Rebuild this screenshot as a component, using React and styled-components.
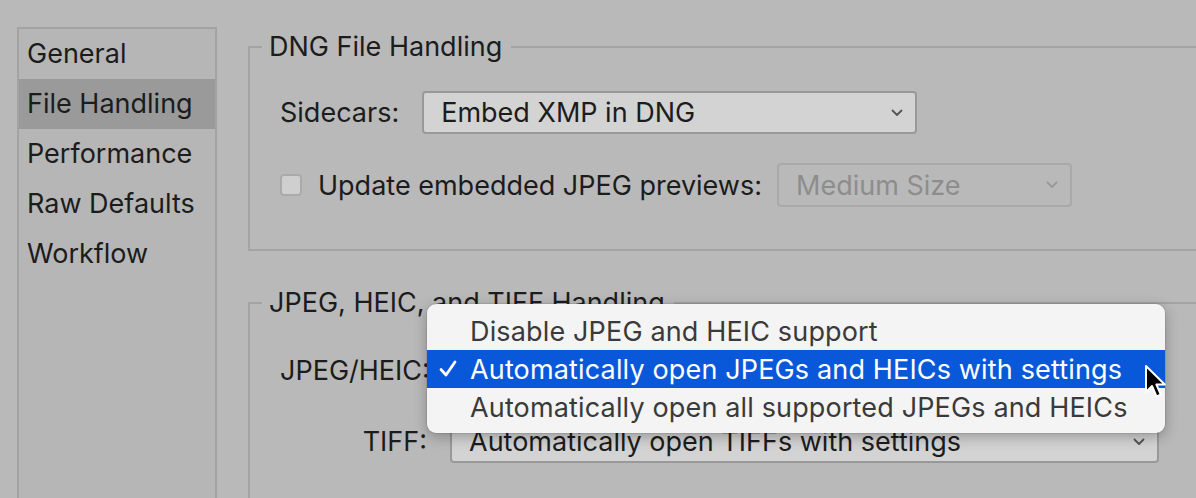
import React from 'react'
import styled, { createGlobalStyle } from 'styled-components'

const Global = createGlobalStyle`
  html, body {
    margin: 0;
    padding: 0;
    background: #b9b9b9;
    overflow: hidden;
  }
  body {
    font-family: Inter, "Noto Sans", sans-serif;
    color: #1c1c1c;
  }
`;

const Page = styled.div`
  width: 1196px;
  height: 498px;
  display: flex;
  align-items: flex-start;
  padding: 27px 0 0 17px;
  box-sizing: border-box;
  overflow: hidden;
`;

const Sidebar = styled.ul`
  list-style: none;
  margin: 0;
  padding: 0;
  width: 200px;
  height: 520px;
  box-sizing: border-box;
  border: 2px solid #a3a3a3;
  background: #b6b6b6;
  flex-shrink: 0;
`;

const NavItem = styled.li`
  height: 50px;
  line-height: 50px;
  padding-left: 8px;
  font-size: 27px;
  background: ${p => (p.$active ? '#9a9a9a' : 'transparent')};
`;

const Main = styled.div`
  flex: 1;
  padding-left: 31px;
  display: flex;
  flex-direction: column;
  gap: ${p => p.$gap}px;
`;

const Group = styled.fieldset`
  margin: 0;
  border: 2px solid #a3a3a3;
  border-right: none;
  padding: 0;
  min-width: 0;
  height: ${p => p.$height}px;
  box-sizing: border-box;
  margin-top: ${p => p.$top || 0}px;
`;

const Legend = styled.legend`
  font-size: 27px;
  padding: 0 9px 0 7px;
  margin-left: 12px;
  line-height: 30px;
  height: 30px;
`;

const GroupBody = styled.div`
  padding: ${p => p.$top}px 0 0 30px;
  position: relative;
`;

const Row = styled.div`
  display: flex;
  align-items: center;
  gap: ${p => p.$gap ?? 20}px;
  margin-bottom: ${p => p.$mb || 0}px;
  position: relative;
`;

const Label = styled.span`
  font-size: 27px;
  width: ${p => (p.$w ? `${p.$w}px` : 'auto')};
  text-align: right;
  flex-shrink: 0;
`;

const CheckLabel = styled.span`
  font-size: 27px;
  margin: 0 15px 0 16px;
  flex-shrink: 0;
`;

const Select = styled.div`
  width: ${p => p.$w}px;
  height: ${p => p.$h || 43}px;
  box-sizing: border-box;
  border: 2px solid ${p => (p.$disabled ? '#a9a9a9' : '#999')};
  border-radius: 4px;
  background: ${p => (p.$disabled ? 'transparent' : '#d3d3d3')};
  display: flex;
  align-items: center;
  justify-content: space-between;
  padding: 0 12px 0 17px;
  font-size: 27px;
  color: ${p => (p.$disabled ? '#8d8d8d' : '#1c1c1c')};
  flex-shrink: 0;
`;

const Checkbox = styled.span`
  width: 22px;
  height: 22px;
  box-sizing: border-box;
  border: 2px solid #aaa;
  border-radius: 4px;
  background: #cfcfcf;
  flex-shrink: 0;
`;

const Menu = styled.ul`
  position: absolute;
  left: 147px;
  top: -45px;
  width: 738px;
  margin: 0;
  padding: 8px 0 7px;
  list-style: none;
  background: #f4f4f4;
  border-radius: 9px;
  box-shadow: 0 4px 14px rgba(0, 0, 0, 0.28), 0 0 0 1px rgba(0, 0, 0, 0.08);
  z-index: 3;
`;

const MenuItem = styled.li`
  height: 38px;
  display: flex;
  align-items: center;
  font-size: 27px;
  letter-spacing: 0.15px;
  padding-left: 43px;
  position: relative;
  color: ${p => (p.$active ? '#fff' : '#3a3a3a')};
  background: ${p => (p.$active ? '#0958d9' : 'transparent')};
`;

const Check = styled.span`
  position: absolute;
  left: 11px;
  top: 9px;
  display: flex;
`;

const Cursor = styled.svg`
  position: absolute;
  left: 864px;
  top: 15px;
  z-index: 4;
`;

const Chevron = ({ color = '#555' }) => (
  <svg width="12" height="8" viewBox="0 0 12 8">
    <path d="M1.5 1.5 L6 6 L10.5 1.5" fill="none" stroke={color} strokeWidth="1.8" strokeLinecap="round" strokeLinejoin="round" />
  </svg>
)

const nav = ['General', 'File Handling', 'Performance', 'Raw Defaults', 'Workflow']

export default function App() {
  return (
    <>
      <Global />
      <Page>
        <Sidebar>
          {nav.map(n => (
            <NavItem key={n} $active={n === 'File Handling'}>{n}</NavItem>
          ))}
        </Sidebar>
        <Main $gap={37}>
          <Group $height={219} $top={5}>
            <Legend>DNG File Handling</Legend>
            <GroupBody $top={29}>
              <Row $gap={23} $mb={29}>
                <Label>Sidecars:</Label>
                <Select $w={495}>
                  <span>Embed XMP in DNG</span>
                  <Chevron />
                </Select>
              </Row>
              <Row $gap={0}>
                <Checkbox />
                <CheckLabel>Update embedded JPEG previews:</CheckLabel>
                <Select $w={295} $h={44} $disabled>
                  <span>Medium Size</span>
                  <Chevron color="#999" />
                </Select>
              </Row>
            </GroupBody>
          </Group>
          <Group $height={260}>
            <Legend>JPEG, HEIC, and TIFF Handling</Legend>
            <GroupBody $top={31}>
              <Row $gap={23} $mb={28}>
                <Label $w={147}>JPEG/HEIC:</Label>
                <Select $w={709}>
                  <span />
                  <Chevron />
                </Select>
                <Menu>
                  <MenuItem>Disable JPEG and HEIC support</MenuItem>
                  <MenuItem $active>
                    <Check>
                      <svg width="20" height="20" viewBox="0 0 20 20">
                        <path d="M3 10.5 L8 16 L17 3" fill="none" stroke="#fff" strokeWidth="2.8" strokeLinecap="round" strokeLinejoin="round" />
                      </svg>
                    </Check>
                    Automatically open JPEGs and HEICs with settings
                  </MenuItem>
                  <MenuItem>Automatically open all supported JPEGs and HEICs</MenuItem>
                </Menu>
                <Cursor width="24" height="38" viewBox="0 0 24 38">
                  <path d="M2 2 L2 28 L8 22 L12.5 32.5 L16.8 30.6 L12.4 20.5 L20.8 20.5 Z" fill="#000" stroke="#fff" strokeWidth="2" strokeLinejoin="round" />
                </Cursor>
              </Row>
              <Row $gap={23}>
                <Label $w={147}>TIFF:</Label>
                <Select $w={709}>
                  <span>Automatically open TIFFs with settings</span>
                  <Chevron />
                </Select>
              </Row>
            </GroupBody>
          </Group>
        </Main>
      </Page>
    </>
  )
}
